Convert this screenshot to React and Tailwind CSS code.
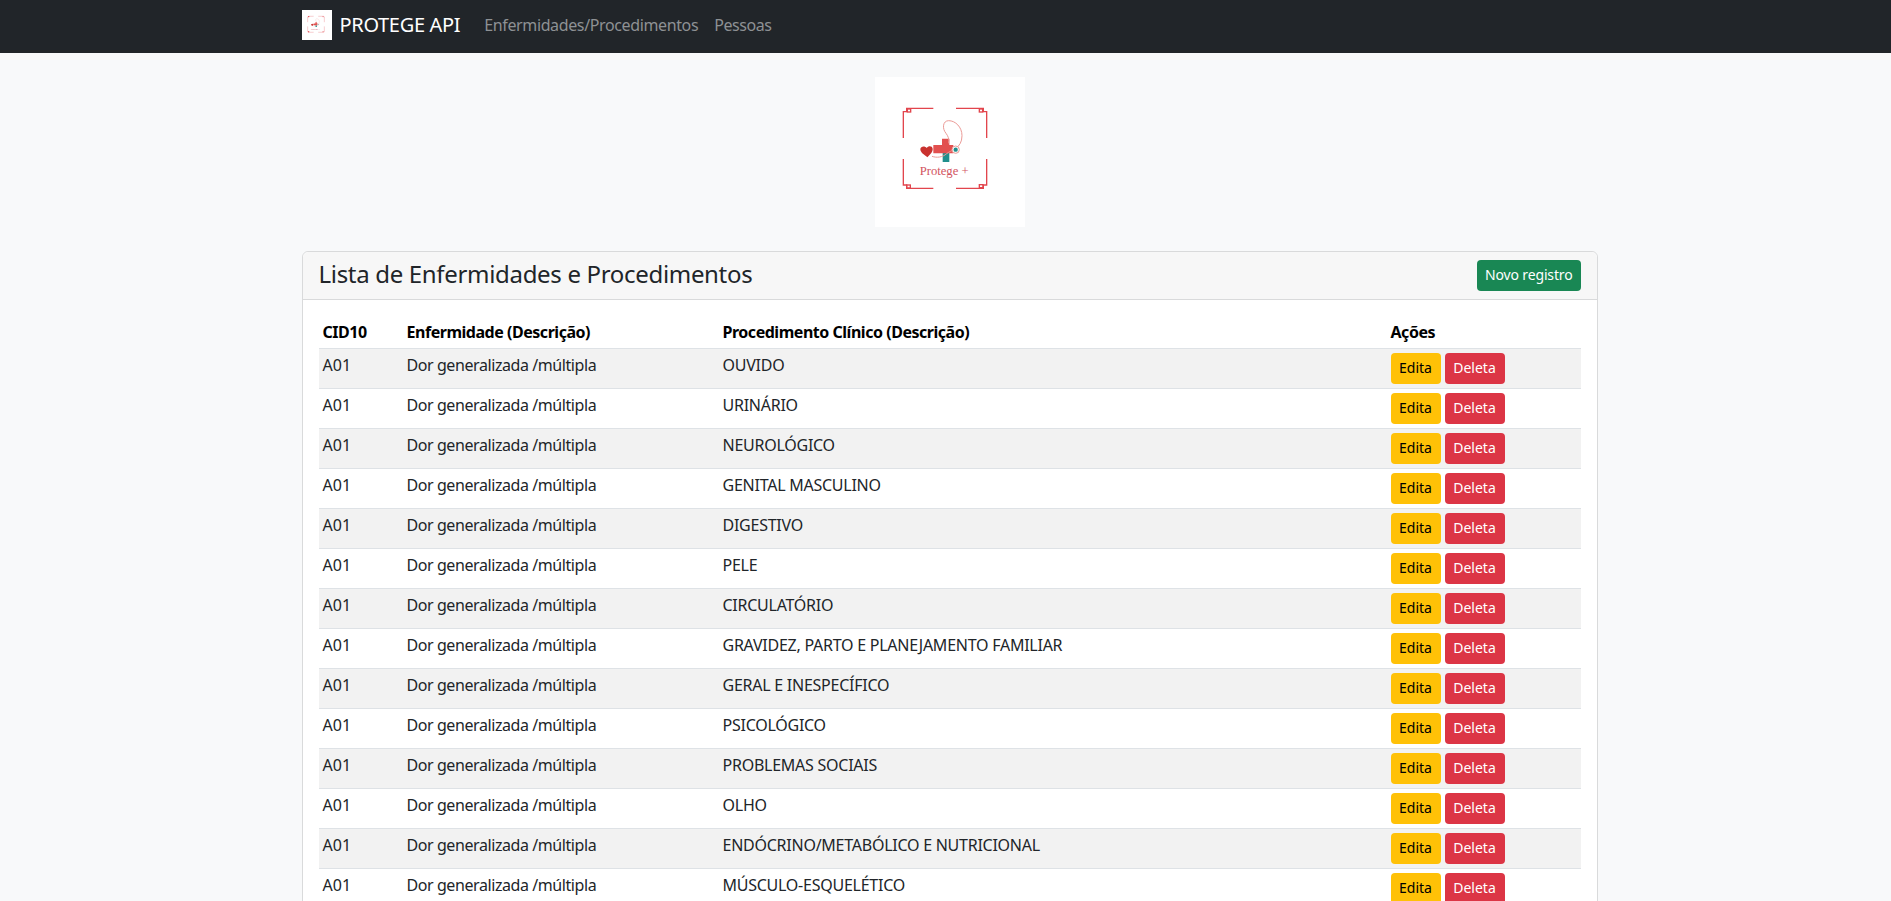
const rows = [
  "OUVIDO",
  "URINÁRIO",
  "NEUROLÓGICO",
  "GENITAL MASCULINO",
  "DIGESTIVO",
  "PELE",
  "CIRCULATÓRIO",
  "GRAVIDEZ, PARTO E PLANEJAMENTO FAMILIAR",
  "GERAL E INESPECÍFICO",
  "PSICOLÓGICO",
  "PROBLEMAS SOCIAIS",
  "OLHO",
  "ENDÓCRINO/METABÓLICO E NUTRICIONAL",
  "MÚSCULO-ESQUELÉTICO",
];

function Logo({ className }) {
  return (
    <svg className={className} viewBox="15 22 450 450" xmlns="http://www.w3.org/2000/svg">
      <rect x="15" y="22" width="450" height="450" fill="#fff" />
      <g fill="none" stroke="#e2454d" strokeWidth="4">
        <path d="M100 205V126H110V116H190M258 116H340V126H350V205M350 268V346H340V356H258M190 356H110V346H100V268" />
        <rect x="112" y="118" width="10" height="9" />
        <rect x="328" y="118" width="10" height="9" />
        <rect x="110" y="346" width="11" height="9" />
        <rect x="328" y="345" width="11" height="9" />
      </g>
      <path d="M218 250h20v27h-20z" fill="#1f8f8c" />
      <path d="M216 207h22v19h12v25h-60v-25h26z" fill="#e2504f" />
      <path d="M172 263c-8-8-21-13-21-25 1-9 14-10 19-3 5-8 17-7 18 2 1 11-10 19-16 26z" fill="#c9322f" />
      <path d="M186 260c14 5 32 3 44-8 12-11 46-14 46-54 0-26-20-45-40-45-18 0-20 24-8 38 6 8 10 16 8 30" fill="none" stroke="#eb9a96" strokeWidth="3" />
      <circle cx="257" cy="240" r="11" fill="#fff" stroke="#eb9a96" strokeWidth="3" />
      <circle cx="257" cy="240" r="6.5" fill="#1f8f8c" />
      <text x="149" y="315" fill="#d2545f" fontSize="38" fontFamily="'Liberation Serif', serif">Protege +</text>
    </svg>
  );
}

export default function App() {
  return (
    <div className="h-[901px] overflow-hidden bg-[#f8f9fa] text-[#212529] text-base" style={{ fontFamily: "'Noto Sans', sans-serif" }}>
      <nav className="bg-[#212529] h-[53px]">
        <div className="ml-[289.5px] w-[1320px] px-3 pb-[3px] flex items-center h-full">
          <a className="flex items-center text-xl text-white mr-4 tracking-[-0.33px]">
            <Logo className="w-[30px] h-[30px] mr-2" />
            PROTEGE API
          </a>
          <a className="text-[#8e9194] px-2 tracking-[-0.37px]">Enfermidades/Procedimentos</a>
          <a className="text-[#8e9194] px-2 tracking-[-0.45px]">Pessoas</a>
        </div>
      </nav>

      <div className="ml-[289.5px] w-[1320px] px-3">
        <div className="flex justify-center mt-6 mb-6">
          <Logo className="w-[150px] h-[150px]" />
        </div>

        <div className="bg-white border border-[#d9dadb] rounded-md">
          <div className="bg-[#f7f7f7] border-b border-[#d9dadb] rounded-t-md px-4 h-[48px] flex items-center justify-between">
            <h4 className="text-2xl font-normal tracking-[-0.32px] pb-[3px]">Lista de Enfermidades e Procedimentos</h4>
            <button className="bg-[#198754] text-white text-sm rounded px-2 pb-px h-[31px] tracking-[-0.15px]">Novo registro</button>
          </div>
          <div className="p-4">
            <table className="w-full table-fixed border-collapse">
              <colgroup>
                <col className="w-[84px]" />
                <col className="w-[316px]" />
                <col className="w-[668px]" />
                <col />
              </colgroup>
              <thead>
                <tr className="border-b border-[#dee2e6] text-left text-black tracking-[-0.47px]">
                  <th className="p-1 font-bold">CID10</th>
                  <th className="p-1 font-bold">Enfermidade (Descrição)</th>
                  <th className="p-1 font-bold">Procedimento Clínico (Descrição)</th>
                  <th className="p-1 font-bold">Ações</th>
                </tr>
              </thead>
              <tbody>
                {rows.map((proc, idx) => (
                  <tr key={idx} className={`border-b border-[#dee2e6] ${idx % 2 === 0 ? "bg-[#f2f2f2]" : ""}`}>
                    <td className="p-1 align-top">A01</td>
                    <td className="p-1 align-top tracking-[-0.42px]">Dor generalizada /múltipla</td>
                    <td className="p-1 align-top tracking-[-0.25px]">{proc}</td>
                    <td className="p-1 align-top">
                      <div className="flex gap-1">
                        <button className="bg-[#ffc107] text-black text-sm rounded pb-0.5 h-[31px] w-[50px]">Edita</button>
                        <button className="bg-[#dc3545] text-white text-sm rounded pb-0.5 h-[31px] w-[60px]">Deleta</button>
                      </div>
                    </td>
                  </tr>
                ))}
              </tbody>
            </table>
          </div>
        </div>
      </div>
    </div>
  );
}
